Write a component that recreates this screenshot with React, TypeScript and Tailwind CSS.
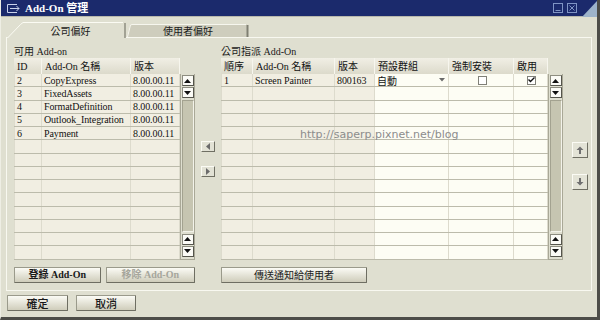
import React from 'react';

const serif = "font-['Liberation_Serif','Noto_Sans_CJK_TC',serif]";
const sans = "font-['Noto_Sans_CJK_TC','Noto_Sans',sans-serif]";

type Col = { w: string; label: string; white?: boolean };

const leftCols: Col[] = [
  { w: 'w-[28px]', label: 'ID' },
  { w: 'w-[89px]', label: 'Add-On 名稱' },
  { w: 'w-[49px]', label: '版本' },
];

const rightCols: Col[] = [
  { w: 'w-[32px]', label: '順序' },
  { w: 'w-[82px]', label: 'Add-On 名稱' },
  { w: 'w-[40px]', label: '版本' },
  { w: 'w-[74px]', label: '預設群組', white: true },
  { w: 'w-[65px]', label: '強制安裝', white: true },
  { w: 'w-[34px]', label: '啟用', white: true },
];

const leftRows: React.ReactNode[][] = [
  ['2', 'CopyExpress', '8.00.00.11'],
  ['3', 'FixedAssets', '8.00.00.11'],
  ['4', 'FormatDefinition', '8.00.00.11'],
  ['5', 'Outlook_Integration', '8.00.00.11'],
  ['6', 'Payment', '8.00.00.11'],
];

function Checkbox({ checked }: { checked?: boolean }) {
  return (
    <span className="w-[9px] h-[9px] border border-[#808078] bg-white flex items-center justify-center">
      {checked && (
        <svg width="7" height="6" viewBox="0 0 7 6">
          <path d="M0.5 2.5 L2.5 4.5 L6.5 0.5" stroke="#111" strokeWidth="1.4" fill="none" />
        </svg>
      )}
    </span>
  );
}

const rightRows: React.ReactNode[][] = [
  [
    '1',
    'Screen Painter',
    '800163',
    <span className="flex w-full items-center justify-between pr-[3px]">
      <span className={sans + ' text-[10px]'}>自動</span>
      <svg width="6" height="4" viewBox="0 0 6 4">
        <polygon points="0,0 6,0 3,3.5" fill="#6a6a6a" />
      </svg>
    </span>,
    <span className="flex w-full justify-center">
      <Checkbox />
    </span>,
    <span className="flex w-full justify-center">
      <Checkbox checked />
    </span>,
  ],
];

function Grid({ cols, rows }: { cols: Col[]; rows: React.ReactNode[][] }) {
  const body = Array.from({ length: 14 }, (_, i) => rows[i] || []);
  return (
    <div className={'flex flex-col text-[10px] text-[#111] ' + serif}>
      <div className="flex h-[16px]">
        {cols.map((c, i) => (
          <div
            key={i}
            className={
              c.w +
              ' h-full flex items-center pl-[3px] border-r border-[#f7f6ee] bg-gradient-to-b from-[#f1efe5] to-[#dcdacb] whitespace-nowrap'
            }
          >
            {c.label}
          </div>
        ))}
      </div>
      {body.map((r, ri) => (
        <div key={ri} className="flex h-[13.25px] border-b border-[#bcbbab]">
          {cols.map((c, ci) => (
            <div
              key={ci}
              className={
                c.w +
                ' h-full flex items-center pl-[2px] border-r border-[#dddbcd] whitespace-nowrap overflow-hidden tracking-[-0.1px] ' +
                (c.white ? 'bg-[#fdfdf4]' : 'bg-[#f1eee2]') +
                (ci === 0 ? ' border-l border-l-[#dddbcd]' : '')
              }
            >
              {r[ci]}
            </div>
          ))}
        </div>
      ))}
    </div>
  );
}

function ScrollBtn({ down }: { down?: boolean }) {
  return (
    <div className="w-[12px] h-[11px] bg-[#fbfbf6] border border-[#8d8d80] border-r-[#55554c] border-b-[#55554c] flex items-center justify-center">
      <svg width="7" height="4" viewBox="0 0 7 4">
        <polygon points={down ? '0,0 7,0 3.5,4' : '0,4 7,4 3.5,0'} fill="#111" />
      </svg>
    </div>
  );
}

function ScrollBar() {
  return (
    <div className="w-[15px] h-[185.5px] mt-[16px] border-l border-r border-b border-[#a9a897] flex flex-col items-center pt-[1px] pb-[2px] gap-[1px]">
      <ScrollBtn />
      <ScrollBtn down />
      <div className="flex-1 w-[12px] my-[1px] bg-[#c6c5b1] border border-[#a3a290] border-r-[#f3f3ea] border-b-[#f3f3ea]" />
      <ScrollBtn />
      <ScrollBtn down />
    </div>
  );
}

function Button({ children, className, disabled }: { children: React.ReactNode; className: string; disabled?: boolean }) {
  return (
    <div
      className={
        className +
        ' h-[16px] flex items-center justify-center border border-[#9a9a8b] border-r-[#6e6e62] border-b-[#6e6e62] rounded-[1px] bg-gradient-to-b from-[#fbfbf5] to-[#cfcdbb] text-[10px] whitespace-nowrap ' +
        (disabled ? 'text-[#a6a69c]' : 'text-[#1a1a1a]')
      }
    >
      {children}
    </div>
  );
}

function SmallArrow({ dir }: { dir: 'left' | 'right' }) {
  return (
    <div className="w-[14px] h-[11px] bg-[#e2e2d5] border border-[#fbfbf4] border-r-[#6f6f63] border-b-[#6f6f63] flex items-center justify-center">
      <svg width="4" height="7" viewBox="0 0 4 7">
        <polygon points={dir === 'left' ? '4,0 4,7 0,3.5' : '0,0 0,7 4,3.5'} fill="#6b6b6b" />
      </svg>
    </div>
  );
}

function MoveBtn({ down }: { down?: boolean }) {
  return (
    <div className="w-[16px] h-[16px] bg-[#e3e3d6] border border-[#fbfbf4] border-r-[#6f6f63] border-b-[#6f6f63] flex items-center justify-center">
      <svg width="8" height="8" viewBox="0 0 8 8">
        {down ? (
          <path d="M3 0 H5 V4 H7.5 L4 7.5 L0.5 4 H3 Z" fill="#707070" />
        ) : (
          <path d="M3 8 H5 V4 H7.5 L4 0.5 L0.5 4 H3 Z" fill="#707070" />
        )}
      </svg>
    </div>
  );
}

export default function App() {
  return (
    <div className="relative w-[600px] h-[320px] bg-[#dfdfd0] flex flex-col border-l border-l-[#eeeee4] border-r-[3px] border-b-[3px] border-r-[#4d4d48] border-b-[#4d4d48] overflow-hidden">
      {/* title bar */}
      <div className="relative h-[17px] bg-[#1b2a6c] flex items-center pl-[5px] border-b border-[#b8b8ac]">
        <svg width="15" height="11" viewBox="0 0 15 11" className="mr-[4px]">
          <path d="M11 1.5 H1.5 V9.5 H11" stroke="#c9d2ea" strokeWidth="1" fill="none" />
          <path d="M4 5.5 H13 M10.5 3 L13 5.5 L10.5 8" stroke="#c9d2ea" strokeWidth="1" fill="none" />
        </svg>
        <span className={'text-[11px] font-bold text-white ' + serif}>Add-On 管理</span>
        <div className="ml-auto flex items-center gap-[4px] mr-[20px]">
          <svg width="10" height="10" viewBox="0 0 10 10">
            <rect x="0.5" y="0.5" width="9" height="9" stroke="#7f94c4" fill="none" />
            <path d="M2.5 7.5 H7.5" stroke="#7f94c4" />
          </svg>
          <svg width="10" height="10" viewBox="0 0 10 10">
            <rect x="0.5" y="0.5" width="9" height="9" stroke="#7f94c4" fill="none" />
            <path d="M2.5 2.5 L7.5 7.5 M7.5 2.5 L2.5 7.5" stroke="#7f94c4" />
          </svg>
        </div>
        <svg width="15" height="17" viewBox="0 0 15 17" className="absolute right-0 top-0">
          <polygon points="0,17 15,1 15,17" fill="#9db3ca" />
        </svg>
      </div>

      {/* tabs */}
      <div className={'relative z-10 h-[21px] -mb-px flex items-end pl-[6px] text-[10px] text-[#1a1a1a] ' + sans}>
        <div className="relative w-[119px] h-[16px] flex items-center justify-center pl-[8px]">
          <svg width="119" height="16" viewBox="0 0 119 16" className="absolute inset-0">
            <polygon points="0,16 13,2 16,0.5 116,0.5 118,2 118,16" fill="#dfdfd0" />
            <polyline points="0.5,16 13.5,2.5 16,0.5 116,0.5" stroke="#fbfbf3" fill="none" />
            <line x1="118" y1="1" x2="118" y2="16" stroke="#8e8e80" strokeWidth="1.5" />
          </svg>
          <span className="relative">公司偏好</span>
        </div>
        <div className="relative w-[122px] h-[13px] mb-[1px] ml-[1px] flex items-center justify-center">
          <svg width="122" height="13" viewBox="0 0 122 13" className="absolute inset-0">
            <polygon points="0,13 3,1 5,0.5 119,0.5 120,1 120,13" fill="#cecdbd" />
            <polyline points="0.5,13 3.5,1 5,0.5 119,0.5" stroke="#f6f6ee" fill="none" />
            <line x1="120.5" y1="1" x2="120.5" y2="13" stroke="#7f7f72" strokeWidth="2" />
          </svg>
          <span className="relative">使用者偏好</span>
        </div>
      </div>

      {/* tab panel */}
      <div className="ml-[5px] w-[586px] h-[254px] border border-[#f8f8f0] flex pl-[7px]">
        {/* left */}
        <div className="w-[181px] flex flex-col">
          <div className={'h-[13px] mt-[6px] text-[10px] text-[#1a1a1a] ' + serif}>可用 Add-on</div>
          <div className="flex mt-[1px]">
            <Grid cols={leftCols} rows={leftRows} />
            <ScrollBar />
          </div>
          <div className={'flex gap-[5px] mt-[7px] ' + serif}>
            <Button className="w-[87px] font-bold">登錄 Add-On</Button>
            <Button className="w-[90px] font-bold" disabled>
              移除 Add-On
            </Button>
          </div>
        </div>

        {/* middle */}
        <div className="w-[26px] flex flex-col items-center pt-[103px] gap-[14px]">
          <SmallArrow dir="left" />
          <SmallArrow dir="right" />
        </div>

        {/* right */}
        <div className="w-[342px] flex flex-col">
          <div className={'h-[13px] mt-[6px] text-[10px] text-[#1a1a1a] ' + serif}>公司指派 Add-On</div>
          <div className="flex mt-[1px]">
            <Grid cols={rightCols} rows={rightRows} />
            <ScrollBar />
          </div>
          <div className={'flex mt-[7px] ' + sans}>
            <Button className="w-[146px]">傳送通知給使用者</Button>
          </div>
        </div>

        {/* move up / down */}
        <div className="w-[28px] flex flex-col items-center pt-[104px] pl-[6px] gap-[16px]">
          <MoveBtn />
          <MoveBtn down />
        </div>
      </div>

      {/* ok / cancel */}
      <div className={'flex gap-[8px] mt-[4px] ml-[6px] ' + sans}>
        <Button className="w-[61px] font-medium text-[11px]">確定</Button>
        <Button className="w-[60px] font-medium text-[11px]">取消</Button>
      </div>

      {/* watermark */}
      <div className="absolute left-[299px] top-[127px] text-[11px] text-[#8c8c8c] font-['DejaVu_Sans',sans-serif] whitespace-nowrap">
        http://saperp.pixnet.net/blog
      </div>
    </div>
  );
}
